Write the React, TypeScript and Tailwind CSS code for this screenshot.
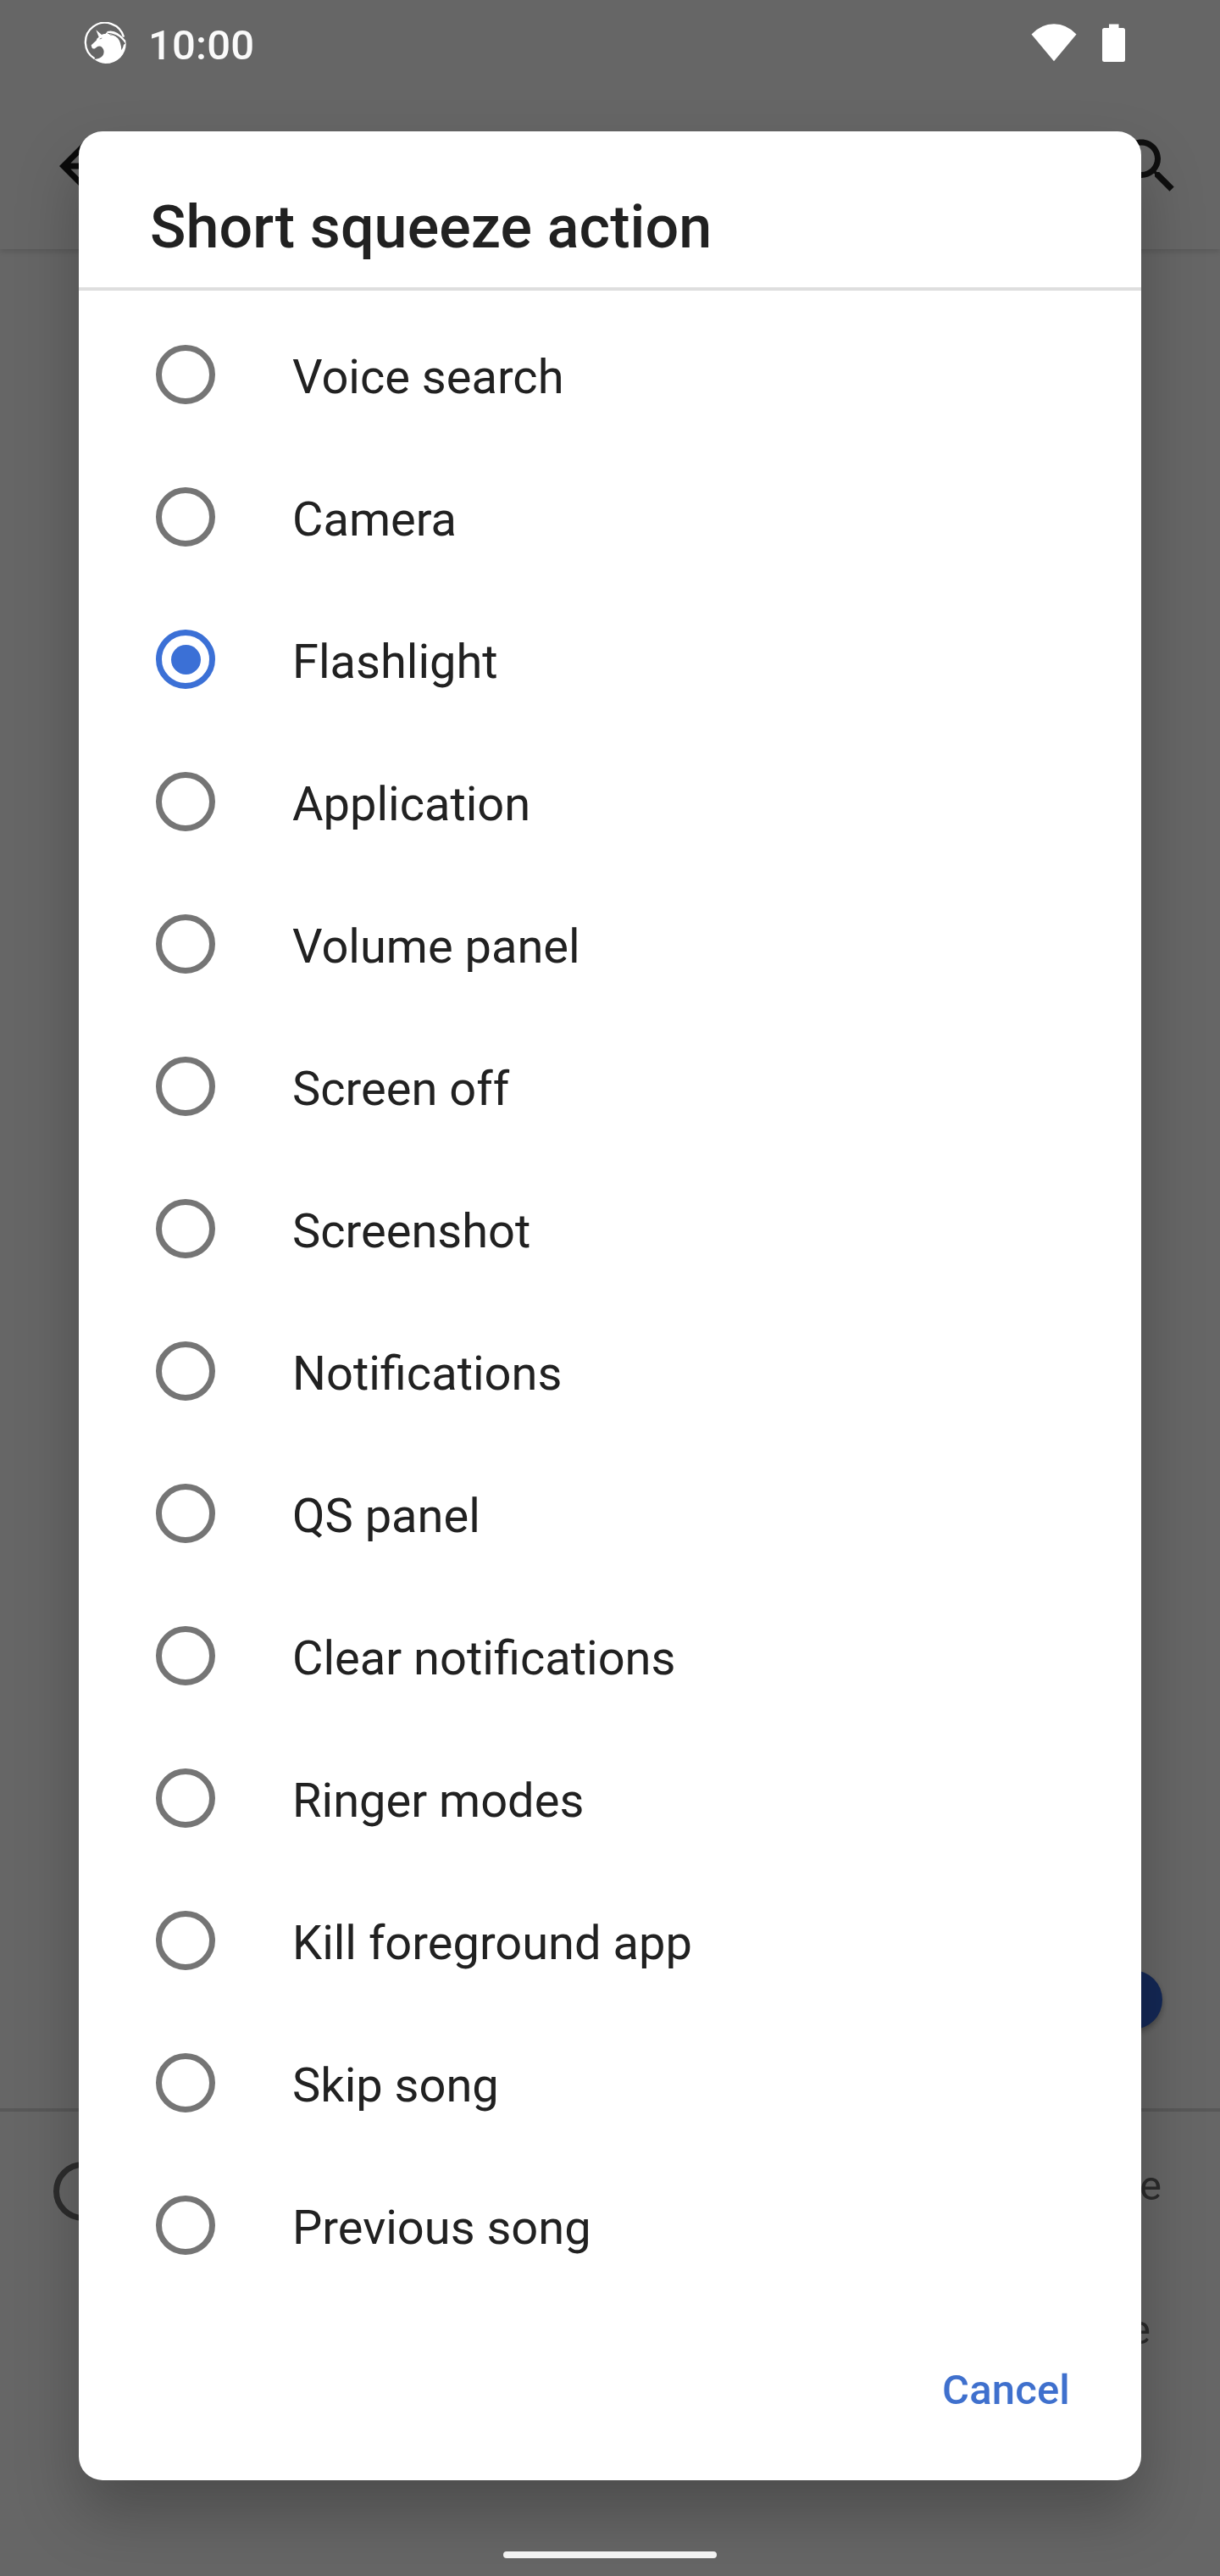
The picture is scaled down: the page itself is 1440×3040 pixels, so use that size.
import React, { useState } from 'react';


const ACTIONS = [
    'Voice search',
    'Camera',
    'Flashlight',
    'Application',
    'Volume panel',
    'Screen off',
    'Screenshot',
    'Notifications',
    'QS panel',
    'Clear notifications',
    'Ringer modes',
    'Kill foreground app',
    'Skip song',
    'Previous song',
];

function UnicornIcon() {

  return (
    <svg className="w-[50px] h-[49px]" viewBox="9 12 150 147" aria-hidden="true">
        <path d="M47 142A69 69 0 1 1 150 65" fill="none" stroke="white" strokeWidth="7" />
        <path fill="white" d="M52 40L72 57Q79 53 85 54L91 47L95 54Q115 54 129 69Q141 84 142 112Q148 103 150 92Q157 89 158 84Q160 113 139 137Q117 159 85 159Q63 158 46 144Q66 142 75 132Q83 120 78 109Q75 101 69 98Q60 96 54 101L48 106Q40 108 37 102L35 94L53 77Q54 70 62 65Z" />
        <path fill="white" d="M91 45Q112 40 128 51Q147 63 157 78L157 90Q142 67 123 58Q108 50 92 50Z" />
        <path d="M65 72L73 69M98 53Q103 60 111 57Q121 60 127 66" fill="none" stroke="#666666" strokeWidth="2.5" />
    </svg>
  )
}

function StatusBar() {

  return (
    <div className="relative z-20 h-[98px] pl-[99px] pr-[112px] flex items-start justify-between text-white">
        <div className="flex items-start">
            <div className="pt-[26px]"><UnicornIcon /></div>
            <span className="ml-[26px] mt-[25px] text-[49px] leading-[57px] font-medium tracking-[0.2px] text-[#fafafa]">10:00</span>
        </div>
        <div className="flex pt-7 gap-[30px]">
            <svg className="w-[54px] h-[45px]" viewBox="0 0 54 45" fill="currentColor" aria-hidden="true">
                <path d="M27 44.3L0.5 12.5Q12 0.3 27 0.3T53.5 12.5Z" />
            </svg>
            <svg className="w-[27px] h-[45px]" viewBox="0 0 27 45" fill="currentColor" aria-hidden="true">
                <path d="M8 0.5h11.5V5H24.5Q27 5 27 7.5V43Q27 45 24.5 45H2.5Q0 45 0 43V7.5Q0 5 2.5 5H8Z" />
            </svg>
        </div>
    </div>
  )
}

// Settings screen that stays visible around the dialog
function SettingsPage() {

  return (
    <div className="absolute inset-0 flex flex-col bg-white">
        <div className="h-[294px] pt-[98px] pl-[56px] pr-[42px] flex items-center justify-between shadow-[0_3px_7px_rgba(0,0,0,0.14)]">
            <svg className="w-[84px] h-[84px]" viewBox="0 0 24 24" fill="#1a1a1a" aria-hidden="true">
                <path d="M20 11H7.83l5.59-5.59L12 4l-8 8 8 8 1.41-1.41L7.83 13H20v-2z" />
            </svg>
            <svg className="w-[84px] h-[84px]" viewBox="0 0 24 24" fill="#262626" aria-hidden="true">
                <path d="M15.5 14h-.79l-.28-.27C15.41 12.59 16 11.11 16 9.5 16 5.91 13.09 3 9.5 3S3 5.91 3 9.5 5.91 16 9.5 16c1.61 0 3.09-.59 4.23-1.57l.27.28v.79l5 4.99L20.49 19l-4.99-5zm-6 0C7.01 14 5 11.99 5 9.5S7.01 5 9.5 5 14 7.01 14 9.5 11.99 14 9.5 14z" />
            </svg>
        </div>
        <div className="h-[2194px] pr-[68px] pb-[93px] flex items-end justify-end">
            <div className="w-[70px] h-[70px] rounded-full bg-[#3264d7] shadow-[0_4px_7px_rgba(0,0,0,0.3)]"></div>
        </div>
        <div className="h-1 bg-[#dcdcdc]"></div>
        <div className="pl-[63px] pr-[69px] pt-[59px] flex items-start justify-between text-[49px] leading-[57px] text-[#6b6b6b]">
            <div className="w-[70px] h-[70px] rounded-full border-[7px] border-[#707070]"></div>
            <div className="flex flex-col items-end gap-[113px]">
                <span>e</span>
                <span className="pr-[13px]">e</span>
            </div>
        </div>
    </div>
  )
}

type OptionProps = {

     label: string;
     checked: boolean;
     onSelect(): void;
}

function Option({label, checked, onSelect}: OptionProps) {

  return (
    <button type="button" role="radio" aria-checked={checked} onClick={onSelect} className="h-[168px] w-full pl-[91px] flex items-center text-left">
        <span className={`w-[70px] h-[70px] shrink-0 rounded-full border-[7px] flex items-center justify-center ${checked ? 'border-[#3b70d6]' : 'border-[#757575]'}`}>
            {checked && <span className="w-[35px] h-[35px] rounded-full bg-[#3b70d6]"></span>}
        </span>
        <span className="ml-[91px] pt-[5px] text-[56px] leading-[66px] text-[#212121]">{label}</span>
    </button>
  )
}

export default function App() {

    const [selected, setSelected] = useState('Flashlight');

  return (
    <div className="relative w-[1440px] h-[3040px] overflow-hidden font-['Roboto',sans-serif]">
        <SettingsPage />
        <div className="absolute inset-0 bg-black/60"></div>
        <StatusBar />
        <div className="relative z-10 mt-[57px] mx-[93px] h-[2772px] flex flex-col bg-white rounded-[28px] shadow-[0_39px_72px_rgba(0,0,0,0.25)]">
            <h1 className="h-[184px] pl-[84px] pt-[72px] text-[70px] leading-[82px] font-medium tracking-[0.1px] text-[#212121]">Short squeeze action</h1>
            <div className="h-1 bg-[#dedede]"></div>
            <div role="radiogroup" className="pt-[15px]">
                {ACTIONS.map((label) => (
                    <Option key={label} label={label} checked={label === selected} onSelect={() => setSelected(label)} />
                ))}
            </div>
            <div className="pt-[82px] pr-[84px] flex justify-end">
                <button type="button" className="text-[49px] leading-[57px] font-medium tracking-[0.15px] text-[#3f70cd]">Cancel</button>
            </div>
        </div>
        <div className="relative z-10 mt-[84px] mx-auto w-[252px] h-2 rounded-full bg-[#f3f3f3]"></div>
    </div>
  )
}
